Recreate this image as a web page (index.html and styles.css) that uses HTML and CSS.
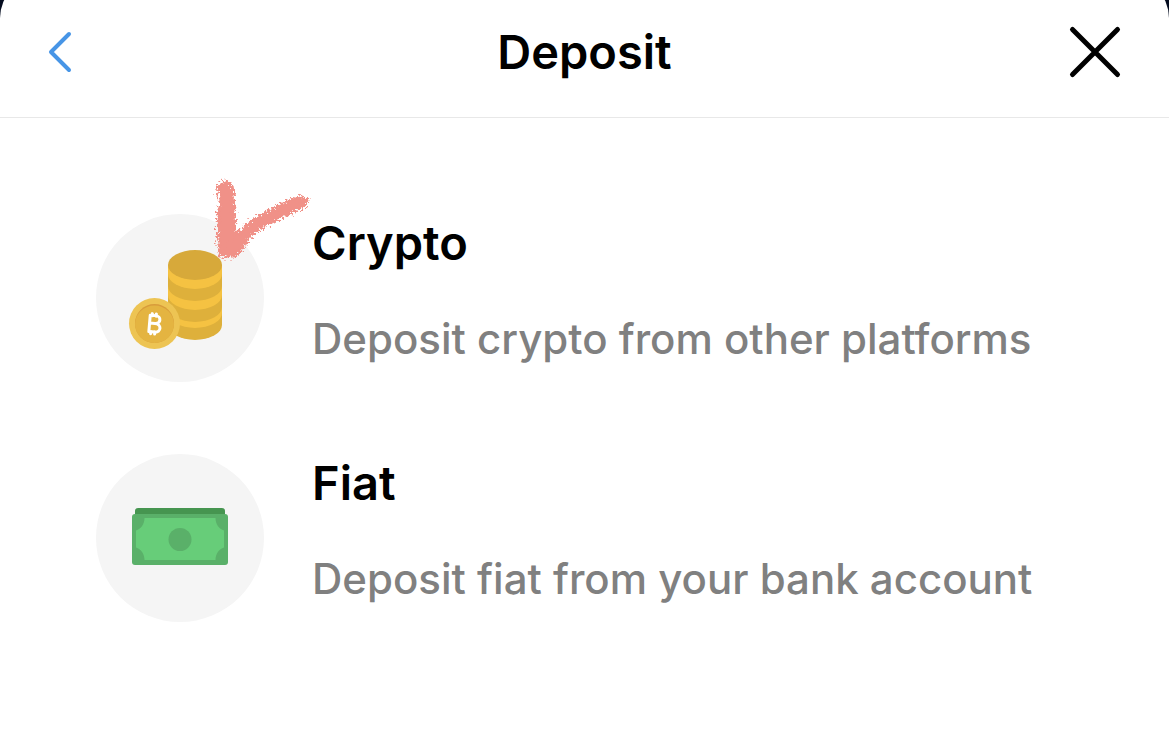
FILE: index.html
```html
<!DOCTYPE html>
<html lang="en">
<head>
    <meta charset="UTF-8">
    <meta name="viewport" content="width=device-width, initial-scale=1.0">
    <title>Deposit</title>
    <link rel="stylesheet" href="styles.css">
</head>
<body>
    <div class="sheet">
        <header class="header">
            <button class="icon-button" type="button" aria-label="Back">
                <svg class="back-icon" width="24" height="42" viewBox="0 0 24 42">
                    <path d="M21 3 L3 21 L21 39" />
                </svg>
            </button>
            <h1 class="title">Deposit</h1>
            <button class="icon-button" type="button" aria-label="Close">
                <svg class="close-icon" width="50" height="50" viewBox="0 0 50 50">
                    <path d="M1.500 2.5 L46.5 47.5 M46.5 2.5 L1.500 47.5" />
                </svg>
            </button>
        </header>

        <main class="options">
            <a class="option" href="#crypto">
                <span class="option-icon">
                    <svg width="168" height="168" viewBox="0 0 168 168">
                        <!-- stack of coins -->
                        <path fill="#deb03b" d="M72 51 V111 A27 15 0 0 0 126 111 V51 Z" />
                        <path fill="#f5c242" d="M72 51 V60 A27 15 0 0 0 126 60 V51 Z" />
                        <path fill="#f5c242" d="M72 72 A27 15 0 0 0 126 72 V81 A27 15 0 0 1 72 81 Z" />
                        <path fill="#f5c242" d="M72 93 A27 15 0 0 0 126 93 V99 A27 15 0 0 1 72 99 Z" />
                        <ellipse fill="#d7a93a" cx="99" cy="51" rx="27" ry="15" />
                        <!-- bitcoin -->
                        <circle fill="#edc453" cx="58.5" cy="109.5" r="25.5" />
                        <circle fill="#d89c3b" cx="58.5" cy="109.5" r="19.5" />
                        <path fill="#e4b441" d="M39 110 A19.5 18.5 0 0 1 78 110 A19.5 19 0 0 1 39 110 Z" />
                        <g class="bitcoin-sign" transform="rotate(5 58 110)">
                            <path d="M53.5 101.5 V118 M53.5 101.5 H59 C65 101.5 65 109.5 59 109.5 H53.5 M59 109.5 C66 109.5 66 118 59.5 118 H53.5" />
                            <path d="M55.5 99.8 V102 M59.5 99.8 V102 M55.5 118 V120 M59.5 118 V120" />
                        </g>
                    </svg>
                    <svg class="mark" width="100" height="84" viewBox="0 0 100 84">
                        <filter id="crayon" x="-10%" y="-10%" width="120%" height="120%" color-interpolation-filters="sRGB">
                            <feTurbulence type="fractalNoise" baseFrequency="0.45" numOctaves="3" seed="4" />
                            <feDisplacementMap in="SourceGraphic" scale="12" xChannelSelector="R" yChannelSelector="G" />
                        </filter>
                        <g filter="url(#crayon)">
                            <path d="M6 10 Q9 4 14 4 Q21 6 21 16 L23 52 Q25 60 22 68 Q26 74 20 78 L9 78 Q6 74 7 66 L6 38 L9 25 Z" />
                            <path d="M10 77 L18 65 Q32 46 52 36 Q66 28 79 22 Q86 17 95 22 Q95 28 86 31 Q72 37 61 43 Q45 51 36 61 Q30 72 23 78 Z" />
                        </g>
                    </svg>
                </span>
                <span class="option-text">
                    <span class="option-name">Crypto</span>
                    <span class="option-info">Deposit crypto from other platforms</span>
                </span>
            </a>

            <a class="option" href="#fiat">
                <span class="option-icon">
                    <svg width="168" height="168" viewBox="0 0 168 168">
                        <rect fill="#469550" x="39" y="54" width="90" height="20" rx="3" />
                        <rect fill="#5ab069" x="36" y="60" width="96" height="51" rx="3" />
                        <path fill="#67cd79" d="M48.5 64 H119.5 C119.5 70 123 75 128 76.5 V93.5 C123 95 119.5 100 119.5 106 H48.5 C48.5 100 45 95 40 93.5 V76.5 C45 75 48.5 70 48.5 64 Z" />
                        <circle fill="#5ab069" cx="84" cy="85.5" r="11.5" />
                    </svg>
                </span>
                <span class="option-text">
                    <span class="option-name">Fiat</span>
                    <span class="option-info">Deposit fiat from your bank account</span>
                </span>
            </a>
        </main>
    </div>
</body>
</html>
```

FILE: styles.css
```css
* {
    box-sizing: border-box;
}
body {
    margin: 0;
    font-family: Inter, "Liberation Sans", sans-serif;
    background-color: #050d20;
    overflow-x: hidden;
}
/* the top of the sheet runs off the screen */
.sheet {
    margin-top: -22px;
    min-height: calc(100vh + 22px);
    background-color: white;
    border-radius: 40px 40px 0 0;
}
.header {
    display: flex;
    align-items: center;
    justify-content: space-between;
    padding: 44px 48px 35px;
    border-bottom: 1px solid #e8e8e8;
}
.title {
    margin: 0;
    font-size: 47px;
    font-weight: 600;
    line-height: 60px;
    color: black;
}
.icon-button {
    display: flex;
    width: 50px;
    padding: 0;
    border: none;
    background: none;
    cursor: pointer;
}
.back-icon,
.close-icon {
    fill: none;
    stroke-width: 4;
    stroke-linecap: round;
    stroke-linejoin: round;
}
.back-icon {
    stroke: #4795e6;
}
.close-icon {
    stroke: black;
    stroke-width: 5;
    overflow: visible;
}
.options {
    display: flex;
    flex-direction: column;
    gap: 72px;
    padding: 96px;
}
.option {
    display: flex;
    gap: 48px;
    color: black;
    text-decoration: none;
}
.option-icon {
    position: relative;
    flex: none;
    width: 168px;
    height: 168px;
    border-radius: 50%;
    background-color: #f5f5f5;
}
.mark {
    position: absolute;
    top: -36px;
    left: 116px;
    fill: #f09188;
    stroke: #f09188;
    stroke-width: 3;
    overflow: visible;
}
.bitcoin-sign {
    fill: none;
    stroke: white;
    stroke-width: 3;
    stroke-linecap: round;
    stroke-linejoin: round;
}
.option-text {
    display: flex;
    flex-direction: column;
    gap: 42px;
}
.option-name {
    font-size: 47px;
    font-weight: 600;
    line-height: 58px;
}
.option-info {
    font-size: 42px;
    font-weight: 500;
    line-height: 50px;
    color: #808080;
    white-space: nowrap;
}
```
